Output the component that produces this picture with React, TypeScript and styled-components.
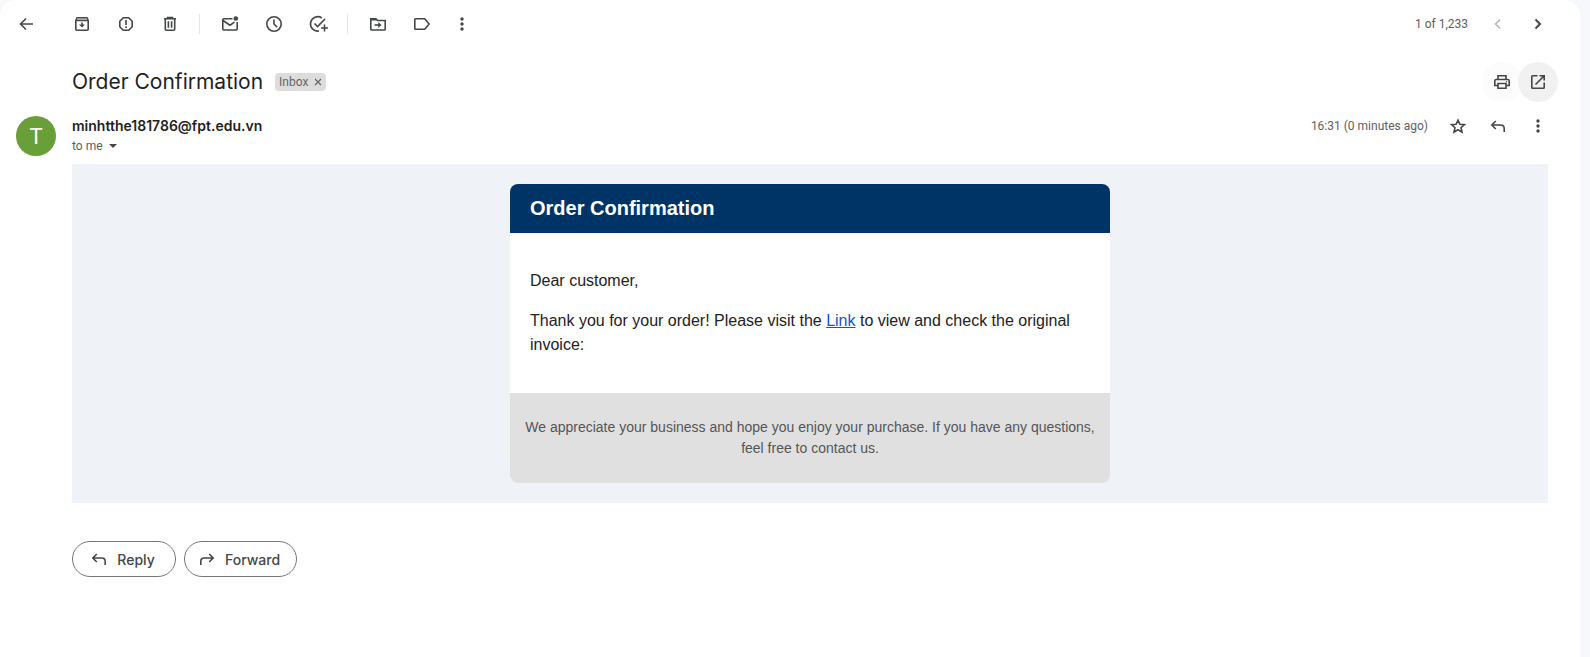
import React from "react";
import styled, { createGlobalStyle } from "styled-components";

const GlobalStyle = createGlobalStyle`
  *, *::before, *::after { box-sizing: border-box; }
  html, body, #root { min-height: 100%; margin: 0; }
  body {
    background: #f6f8fc;
    color: #1f1f1f;
    font-family: Roboto, "Liberation Sans", sans-serif;
    font-size: 14px;
  }
  button { font: inherit; color: inherit; cursor: pointer; }
`;

const displayFont = `Inter, "Liberation Sans", sans-serif`;

const Panel = styled.main`
  min-height: 100vh;
  margin-right: 10px;
  background: #fff;
  border-radius: 16px 16px 0 0;
`;

const Toolbar = styled.header`
  display: flex;
  align-items: center;
  height: 48px;
  padding: 0 22px 0 6px;
`;

const ToolGroup = styled.div<{ $start?: number }>`
  display: flex;
  align-items: center;
  margin-left: ${(p) => p.$start ?? 0}px;
`;

const Divider = styled.span`
  width: 1px;
  height: 20px;
  margin: 0 8px 0 7px;
  background: #e3e5e8;
`;

const IconButton = styled.button<{ $width?: number; $tone?: string; $fill?: string }>`
  display: flex;
  flex: none;
  align-items: center;
  justify-content: center;
  width: ${(p) => p.$width ?? 40}px;
  height: 40px;
  padding: 0;
  border: 0;
  border-radius: 20px;
  background: ${(p) => p.$fill ?? "transparent"};
  color: ${(p) => p.$tone ?? "#444746"};
  &:disabled { cursor: default; }
`;

const Glyph = styled.svg`
  display: block;
  flex: none;
  width: 20px;
  height: 20px;
  fill: none;
  stroke: currentColor;
  stroke-width: 1.6;
`;

const Pager = styled.div`
  display: flex;
  align-items: center;
  margin-left: auto;
`;

const Counter = styled.span`
  margin-right: 10px;
  color: #5e5e5e;
  font-size: 12px;
`;

const SubjectRow = styled.div`
  display: flex;
  align-items: center;
  height: 68px;
  padding: 0 22px 0 72px;
`;

const Subject = styled.h1`
  margin: 0;
  font-family: ${displayFont};
  font-size: 21px;
  font-weight: 400;
  line-height: 28px;
`;

const Tag = styled.div`
  display: flex;
  align-items: center;
  height: 18px;
  margin-left: 12px;
  padding: 0 4px;
  gap: 6px;
  border-radius: 4px;
  background: #ddd;
  color: #666;
  font-size: 12px;
`;

const TagRemove = styled.button`
  display: flex;
  padding: 0;
  border: 0;
  background: none;
`;

const RemoveGlyph = styled(Glyph)`
  width: 8px;
  height: 8px;
`;

const SubjectActions = styled.div`
  display: flex;
  margin-left: auto;
`;

const PrintSlot = styled.div`
  margin-right: -4px;
`;

const SenderRow = styled.div`
  display: flex;
  align-items: flex-start;
  height: 48px;
  padding: 0 22px 0 16px;
`;

const Avatar = styled.div`
  display: flex;
  flex: none;
  align-items: center;
  justify-content: center;
  width: 40px;
  height: 40px;
  margin-right: 16px;
  border-radius: 50%;
  background: #689f38;
  color: #fff;
  font-size: 22px;
`;

const SenderInfo = styled.div`
  display: flex;
  flex-direction: column;
  align-items: flex-start;
`;

const SenderName = styled.span`
  font-family: ${displayFont};
  font-weight: 600;
  line-height: 20px;
`;

const Recipients = styled.button`
  display: flex;
  align-items: center;
  gap: 6px;
  height: 20px;
  padding: 0;
  border: 0;
  background: none;
  color: #5e5e5e;
  font-size: 12px;
`;

const Caret = styled.span`
  border: 4px solid transparent;
  border-top-color: #444746;
  border-bottom: 0;
`;

const MessageMeta = styled.div`
  display: flex;
  align-items: center;
  height: 20px;
  margin-left: auto;
`;

const Time = styled.time`
  margin-right: 10px;
  color: #5e5e5e;
  font-size: 12px;
`;

const MailBody = styled.section`
  margin: 0 32px 0 72px;
  padding: 20px;
  background: #eff3f8;
  font-family: Arial, "Liberation Sans", sans-serif;
`;

const Card = styled.article`
  max-width: 600px;
  margin: 0 auto;
  overflow: hidden;
  border-radius: 8px;
  background: #fff;
`;

const CardHeader = styled.h2`
  margin: 0;
  padding: 10px 20px;
  background: #036;
  color: #fff;
  font-size: 20px;
  line-height: 29px;
`;

const CardContent = styled.div`
  padding: 20px;
  color: #222;
  font-size: 16px;
  line-height: 24px;
`;

const Paragraph = styled.p`
  margin: 16px 0;
`;

const InvoiceLink = styled.a`
  color: #15c;
`;

const CardFooter = styled.footer`
  padding: 24px 10px;
  background: #e0e0e0;
  color: #555;
  font-size: 14px;
  line-height: 21px;
  text-align: center;
`;

const Actions = styled.div`
  display: flex;
  gap: 8px;
  padding: 38px 72px;
`;

const ActionButton = styled.button`
  display: flex;
  align-items: center;
  justify-content: center;
  gap: 8px;
  min-width: 104px;
  height: 36px;
  padding: 0 16px 0 12px;
  border: 1px solid #747775;
  border-radius: 18px;
  background: #fff;
  color: #444746;
  font-family: ${displayFont};
  font-size: 14px;
  font-weight: 500;
`;

const drawings = {
  back: <path d="M17 10H4.500M10 4.500 4.500 10l5.500 5.500" />,
  archive: (
    <>
      <path d="M3.800 6.500 5 3.800h10l1.200 2.700v8.700q0 1-1 1H4.800q-1 0-1-1zM3.800 6.500h12.400M10 8.500v4" />
      <path d="M4.800 4.700h10.400" stroke="#8b8d8c" />
      <path d="m7 10.500 3 3 3-3z" fill="currentColor" stroke="none" />
    </>
  ),
  report: (
    <>
      <path d="M7.300 3.800h5.400l3.500 3.500v5.400l-3.500 3.500H7.300l-3.500-3.500V7.300z" strokeLinejoin="round" />
      <path d="M10 6v5M10 12.300v1.700" />
    </>
  ),
  trash: <path d="M4 4.800h12M7.500 4.500v-1h5v1M5.300 5v10.200q0 1 1 1h7.400q1 0 1-1V5M8.400 7.200v6.600M11.600 7.200v6.600" />,
  unread: (
    <>
      <path d="M12.500 4.800H3.700q-.9 0-.9.9v9.400q0 .9.9.9h12.600q.9 0 .9-.9V8M3 6.500l7 4.700 4.500-3" />
      <circle cx="15.800" cy="4.500" r="2.300" fill="currentColor" stroke="none" />
    </>
  ),
  snooze: (
    <>
      <circle cx="10" cy="10" r="7.200" />
      <path d="M10 5.500V10l3.200 3.200" />
    </>
  ),
  task: <path d="M13.800 4A7.200 7.200 0 1 0 11 17M6.500 9.500l3 3 7.500-7.500M16.500 10.500v7M13 14h7" />,
  move: (
    <>
      <path d="M2.800 15.200V4.800H8l1.500 1.700h7.700v8.700q0 .8-.8.8H3.600q-.8 0-.8-.8z" />
      <path d="M2.800 5.700h5.500" />
      <path d="M6.500 11H11" />
      <path d="m10.300 8 3.200 3-3.200 3z" fill="currentColor" stroke="none" />
    </>
  ),
  label: <path d="M3.500 4.800h9.200l4.400 5.200-4.400 5.200H3.500q-.7 0-.7-.7v-9q0-.7.7-.7z" />,
  more: (
    <g fill="currentColor" stroke="none">
      <circle cx="10" cy="5" r="1.700" />
      <circle cx="10" cy="10" r="1.700" />
      <circle cx="10" cy="15" r="1.700" />
    </g>
  ),
  previous: <path d="m12 5.500-4.500 4.500 4.500 4.500" />,
  next: <path d="m7.500 5.500 4.500 4.500-4.500 4.500" strokeWidth="2" />,
  print: (
    <>
      <path d="M6 7V3.800h8V7M6 13.500H2.800V9q0-1.500 1.500-1.500h11.400q1.500 0 1.500 1.500v4.500H14" />
      <path d="M6 11.500h8v4.700H6z" />
      <circle cx="14.500" cy="9.700" r=".7" fill="currentColor" stroke="none" />
    </>
  ),
  open: <path d="M9.500 3.800H4.600q-.8 0-.8.8v10.800q0 .8.8.8h10.800q.8 0 .8-.8v-4.900M11.500 3.800h4.700v4.700M16 4l-8.500 8.500" />,
  star: <path d="m10 4.200 1.900 4.100 4.500.4-3.400 3 1 4.500-4-2.400-4 2.400 1-4.500-3.400-3 4.500-.4z" />,
  reply: <path d="M7.800 5 3.800 9l4 4M4 9h8.700q3.500 0 3.500 3.500V16" />,
  forward: <path d="M12.200 5l4 4-4 4M16 9H7.300q-3.500 0-3.500 3.500V16" />,
};

type IconName = keyof typeof drawings;

const Icon = ({ name }: { name: IconName }) => (
  <Glyph viewBox="0 0 20 20" aria-hidden="true">{drawings[name]}</Glyph>
);

interface ToolProps {
  icon: IconName;
  label: string;
  width?: number;
  tone?: string;
  fill?: string;
  disabled?: boolean;
}

const Tool = ({ icon, label, width, tone, fill, disabled }: ToolProps) => (
  <IconButton type="button" aria-label={label} $width={width} $tone={tone} $fill={fill} disabled={disabled}>
    <Icon name={icon} />
  </IconButton>
);

export default function App() {
  return (
    <>
      <GlobalStyle />
      <Panel>
        <Toolbar>
          <Tool icon="back" label="Back to Inbox" />
          <ToolGroup $start={14}>
            <Tool icon="archive" label="Archive" width={44} />
            <Tool icon="report" label="Report spam" width={44} />
            <Tool icon="trash" label="Delete" width={44} />
          </ToolGroup>
          <Divider />
          <ToolGroup>
            <Tool icon="unread" label="Mark as unread" width={44} />
            <Tool icon="snooze" label="Snooze" width={44} />
            <Tool icon="task" label="Add to Tasks" width={44} />
          </ToolGroup>
          <Divider />
          <ToolGroup>
            <Tool icon="move" label="Move to" width={44} />
            <Tool icon="label" label="Labels" width={44} />
            <Tool icon="more" label="More" width={36} />
          </ToolGroup>
          <Pager>
            <Counter>1 of 1,233</Counter>
            <Tool icon="previous" label="Newer" tone="#b4b5b5" disabled />
            <Tool icon="next" label="Older" />
          </Pager>
        </Toolbar>

        <SubjectRow>
          <Subject>Order Confirmation</Subject>
          <Tag>
            Inbox
            <TagRemove type="button" aria-label="Remove label Inbox">
              <RemoveGlyph viewBox="0 0 8 8" aria-hidden="true">
                <path d="m1 1 6 6M7 1 1 7" strokeWidth="1.2" />
              </RemoveGlyph>
            </TagRemove>
          </Tag>
          <SubjectActions>
            <PrintSlot>
              <Tool icon="print" label="Print all" fill="#fcfcfc" />
            </PrintSlot>
            <Tool icon="open" label="In new window" fill="#f1f1f1" />
          </SubjectActions>
        </SubjectRow>

        <SenderRow>
          <Avatar aria-hidden="true">T</Avatar>
          <SenderInfo>
            <SenderName>minhtthe181786@fpt.edu.vn</SenderName>
            <Recipients type="button">
              to me <Caret />
            </Recipients>
          </SenderInfo>
          <MessageMeta>
            <Time>16:31 (0 minutes ago)</Time>
            <Tool icon="star" label="Star" />
            <Tool icon="reply" label="Reply" />
            <Tool icon="more" label="More message options" />
          </MessageMeta>
        </SenderRow>

        <MailBody>
          <Card>
            <CardHeader>Order Confirmation</CardHeader>
            <CardContent>
              <Paragraph>Dear customer,</Paragraph>
              <Paragraph>
                Thank you for your order! Please visit the <InvoiceLink href="#invoice">Link</InvoiceLink> to view and
                check the original invoice:
              </Paragraph>
            </CardContent>
            <CardFooter>
              We appreciate your business and hope you enjoy your purchase. If you have any questions, feel free to
              contact us.
            </CardFooter>
          </Card>
        </MailBody>

        <Actions>
          <ActionButton type="button">
            <Icon name="reply" />
            Reply
          </ActionButton>
          <ActionButton type="button">
            <Icon name="forward" />
            Forward
          </ActionButton>
        </Actions>
      </Panel>
    </>
  );
}
